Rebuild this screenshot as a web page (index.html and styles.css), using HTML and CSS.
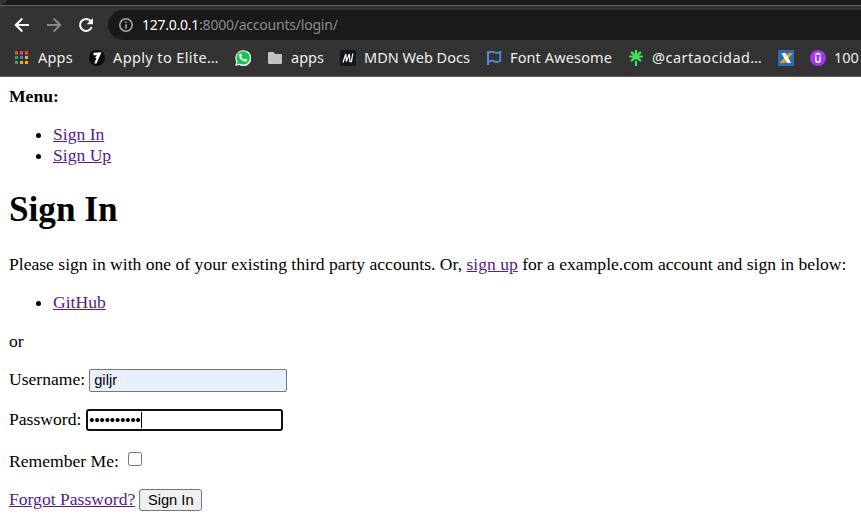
FILE: index.html
```html
<!DOCTYPE html>
<html lang="en">
<head>
<meta charset="utf-8">
<title>Sign In</title>
<link rel="stylesheet" href="styles.css">
</head>
<body>
<header class="browser">
  <div class="tabstrip"><svg width="8" height="5"><path d="M0 0h7Q6 4 0 5z" fill="#353535"/></svg></div>
  <div class="toolbar">
    <svg class="nav" width="16" height="16" viewBox="0 0 16 16" fill="none" stroke="#fff" stroke-width="2"><path d="M15 8H2M8.3 1.5L1.8 8l6.5 6.5"/></svg>
    <svg class="nav" width="16" height="16" viewBox="0 0 16 16" fill="none" stroke="#888" stroke-width="2"><path d="M1 8h13M7.7 1.5L14.2 8l-6.5 6.5"/></svg>
    <svg class="nav" width="16" height="16" viewBox="0 0 16 16" fill="none" stroke="#fff" stroke-width="2"><path d="M13.7 10A6 6 0 1 1 12.6 4"/><path d="M14.9 1v6.2H8.7z" fill="#fff" stroke="none"/></svg>
    <div class="address">
      <svg width="14" height="14" viewBox="0 0 14 14"><circle cx="7" cy="7" r="6.2" fill="none" stroke="#a5a8ac" stroke-width="1.5"/><path d="M6.2 6.2h1.6v4.3H6.2zM6.2 3.4h1.6V5H6.2z" fill="#a5a8ac"/></svg>
      <span class="url"><span class="host">127.0.0.1</span>:8000/accounts/login/</span>
    </div>
  </div>
  <nav class="bookmarks">
    <div class="bookmark"><svg width="16" height="16"><path d="M1 1h3v3H1zM6 1h3v3H6zM11 1h3v3h-3z" fill="#f23c32"/><path d="M1 6h3v3H1zM1 11h3v3H1z" fill="#34a853"/><path d="M6 6h3v3H6z" fill="#2589f5"/><path d="M11 6h3v3h-3zM6 11h3v3H6zM11 11h3v3h-3z" fill="#fbb000"/><path d="M1 4h3M6 4h3M11 4h3" stroke="#999" stroke-width=".7"/></svg><span class="label apps">Apps</span></div>
    <div class="bookmark"><svg width="16" height="16"><circle cx="8" cy="8" r="8" fill="#0b0b0b"/><path d="M4.500 2.800l8-.5L7.500 13.500H5.300L7.500 8H6L8 5.200H4.500z" fill="#fff"/></svg><span class="label elite">Apply to Elite…</span></div>
    <div class="bookmark"><svg width="16" height="16"><path d="M.2 15.800l1-4.100A8 8 0 1 1 4.200 15z" fill="#fff"/><path d="M1.700 14.400l.8-2.900A6.700 6.700 0 1 1 4.600 13.600z" fill="#12c74b"/><path d="M5.100 3.800c.7-.5 1.100-.2 1.400.6l.5 1.300-.8 1.100c.7 1.400 1.700 2.300 3.100 2.800l1-1.100 1.900.9c.2 1.700-1.300 2.400-2.600 2.200C7 11.200 4.300 8.400 4 6.100c-.1-1 .4-1.800 1.100-2.300z" fill="#fff"/></svg></div>
    <div class="bookmark"><svg width="16" height="16"><path d="M1 3q0-1 1-1h4.500l1.700 2H14q1 0 1 1v8q0 1-1 1H2q-1 0-1-1z" fill="#c2c2c2"/></svg><span class="label folder">apps</span></div>
    <div class="bookmark"><svg width="16" height="16"><path d="M0 0h16v16H0z" fill="#15161d"/><path d="M3 12.500L5.800 4l.6 7.500L9.300 4l.6 7.500h1.500L12.800 3.500" fill="none" stroke="#eee" stroke-width="1.300"/></svg><span class="label mdn">MDN Web Docs</span></div>
    <div class="bookmark"><svg width="16" height="16" fill="none" stroke="#4b8bdc"><path d="M2 1v14" stroke-width="2"/><path d="M2 3C5 1 7 1.500 9 2.500S12 3 14.200 2v9c-2 1.200-3.500 1.500-5.500.4S5 10.500 2 11.800" stroke-width="1.900"/></svg><span class="label font">Font Awesome</span></div>
    <div class="bookmark"><svg width="16" height="16"><path d="M8 0v9.500M8 11v5M1.200 6.500h13.600M3.100 1.900l9.800 9.200M12.900 1.900l-9.800 9.200" stroke="#3de65c" stroke-width="2.200"/></svg><span class="label linktree">@cartaocidad…</span></div>
    <div class="bookmark"><svg width="16" height="16"><path d="M0 0h16v16H0z" fill="#2c6ead"/><path d="M10.500 3H15l-8.500 10H1.500z" fill="#f59a16"/><path d="M3.500 3h4l1.500 2.500L11 9l2 4H9L7.500 10 6 8z" fill="#fff"/></svg></div>
    <div class="bookmark"><svg width="16" height="16"><circle cx="8" cy="8" r="8" fill="#a435f0"/><path d="M5.800 6.500v3.800q0 2 2.200 2t2.200-2V6.500M5 5l3-1.700L11 5" fill="none" stroke="#fff" stroke-width="1.500"/></svg><span class="label hundred">100</span></div>
  </nav>
</header>
<main>
  <div><strong>Menu:</strong></div>
  <ul>
    <li><a href="#">Sign In</a></li>
    <li><a href="#">Sign Up</a></li>
  </ul>
  <h1>Sign In</h1>
  <p class="intro">Please sign in with one of your existing third party accounts. Or, <a href="#">sign up</a> for a example.com account and sign in below:</p>
  <ul><li><a href="#">GitHub</a></li></ul>
  <p class="or">or</p>
  <form>
    <p class="field first"><label for="user">Username:</label><input class="username" id="user" type="text" value="giljr"></p>
    <p class="field"><label for="pass">Password:</label><span class="password" id="pass"><span class="dots">••••••••••</span><span class="caret"></span></span></p>
    <p class="field remember"><label for="remember">Remember Me:</label><input class="check" id="remember" type="checkbox"></p>
    <p class="field actions"><a href="#">Forgot Password?</a><button type="button">Sign In</button></p>
  </form>
</main>
</body>
</html>
```
FILE: styles.css
```css
* { box-sizing: border-box; }
body { margin: 0; background: #fff; color: #000; overflow: hidden; font: 17.6px/21px "Liberation Serif", serif; }
svg { display: block; flex: none; }
.browser { height: 77px; background: #333; border-bottom: 1px solid #5c5c5c; font-family: "Noto Sans", sans-serif; overflow: hidden; }
.tabstrip { height: 6px; background: #1a1a1a; border-bottom: 1px solid #626262; }
.toolbar { height: 34px; padding: 4px 0 0 14px; display: flex; align-items: center; gap: 16px; }
.toolbar .address { flex: 1; height: 30px; margin-left: -2px; padding-left: 11px; border-radius: 15px 0 0 15px; background: #1a1a1a; display: flex; align-items: center; gap: 9px; }
.url { color: #8b8b8b; font-size: 14px; line-height: 20px; white-space: nowrap; letter-spacing: -.22px; }
.host { color: #fff; letter-spacing: -.25px; }
.bookmarks { display: flex; gap: 16px; padding: 10px 0 0 14px; }
.bookmark { display: flex; gap: 8px; height: 16px; align-items: center; flex: none; }
.label { color: #eee; font-size: 14.5px; line-height: 20px; margin-top: -2px; white-space: nowrap; }
.apps { width: 35px; letter-spacing: .2px; }
.elite { width: 106px; letter-spacing: .38px; }
.folder { width: 33px; }
.mdn { width: 106px; }
.font { width: 102px; letter-spacing: .12px; }
.linktree { width: 110px; letter-spacing: .45px; }
main { padding: 9px 9px 0; }
a { color: #551a8b; text-decoration: underline; }
ul { margin: 17px 0; padding-left: 44px; }
h1 { margin: 24px 0; font-size: 35.2px; line-height: 40px; }
p { margin: 17px 0; }
.intro { white-space: nowrap; letter-spacing: -.003px; }
.or { margin: 18px 0 0; }
.field { display: flex; align-items: center; gap: 4px; height: 23px; margin: 17px 0; }
.first { margin-top: 16px; }
.username, .password { width: 198px; height: 23px; font: 14.67px "Liberation Sans", sans-serif; }
.username { margin: 2px 0 0; padding: 0 3px 2px 4px; border: 1px solid #767676; border-radius: 2px; background: #e8f0fe; color: #000; }
.password { width: 197px; height: 22px; margin-left: 1px; border: 2px solid #101010; border-radius: 3px; padding-left: 1px; display: flex; align-items: center; }
.dots { line-height: 16px; }
.caret { width: 1px; height: 16px; background: #000; }
.remember { margin: 19px 0 15px; }
.actions { margin-top: 15px; }
.check { width: 14px; height: 14px; margin: 0 0 6px 5px; }
button { height: 22px; width: 63px; padding: 0; border: 1px solid #767676; border-radius: 3px; background: #efefef; color: #000; font: 14.67px "Liberation Sans", sans-serif; }
```
